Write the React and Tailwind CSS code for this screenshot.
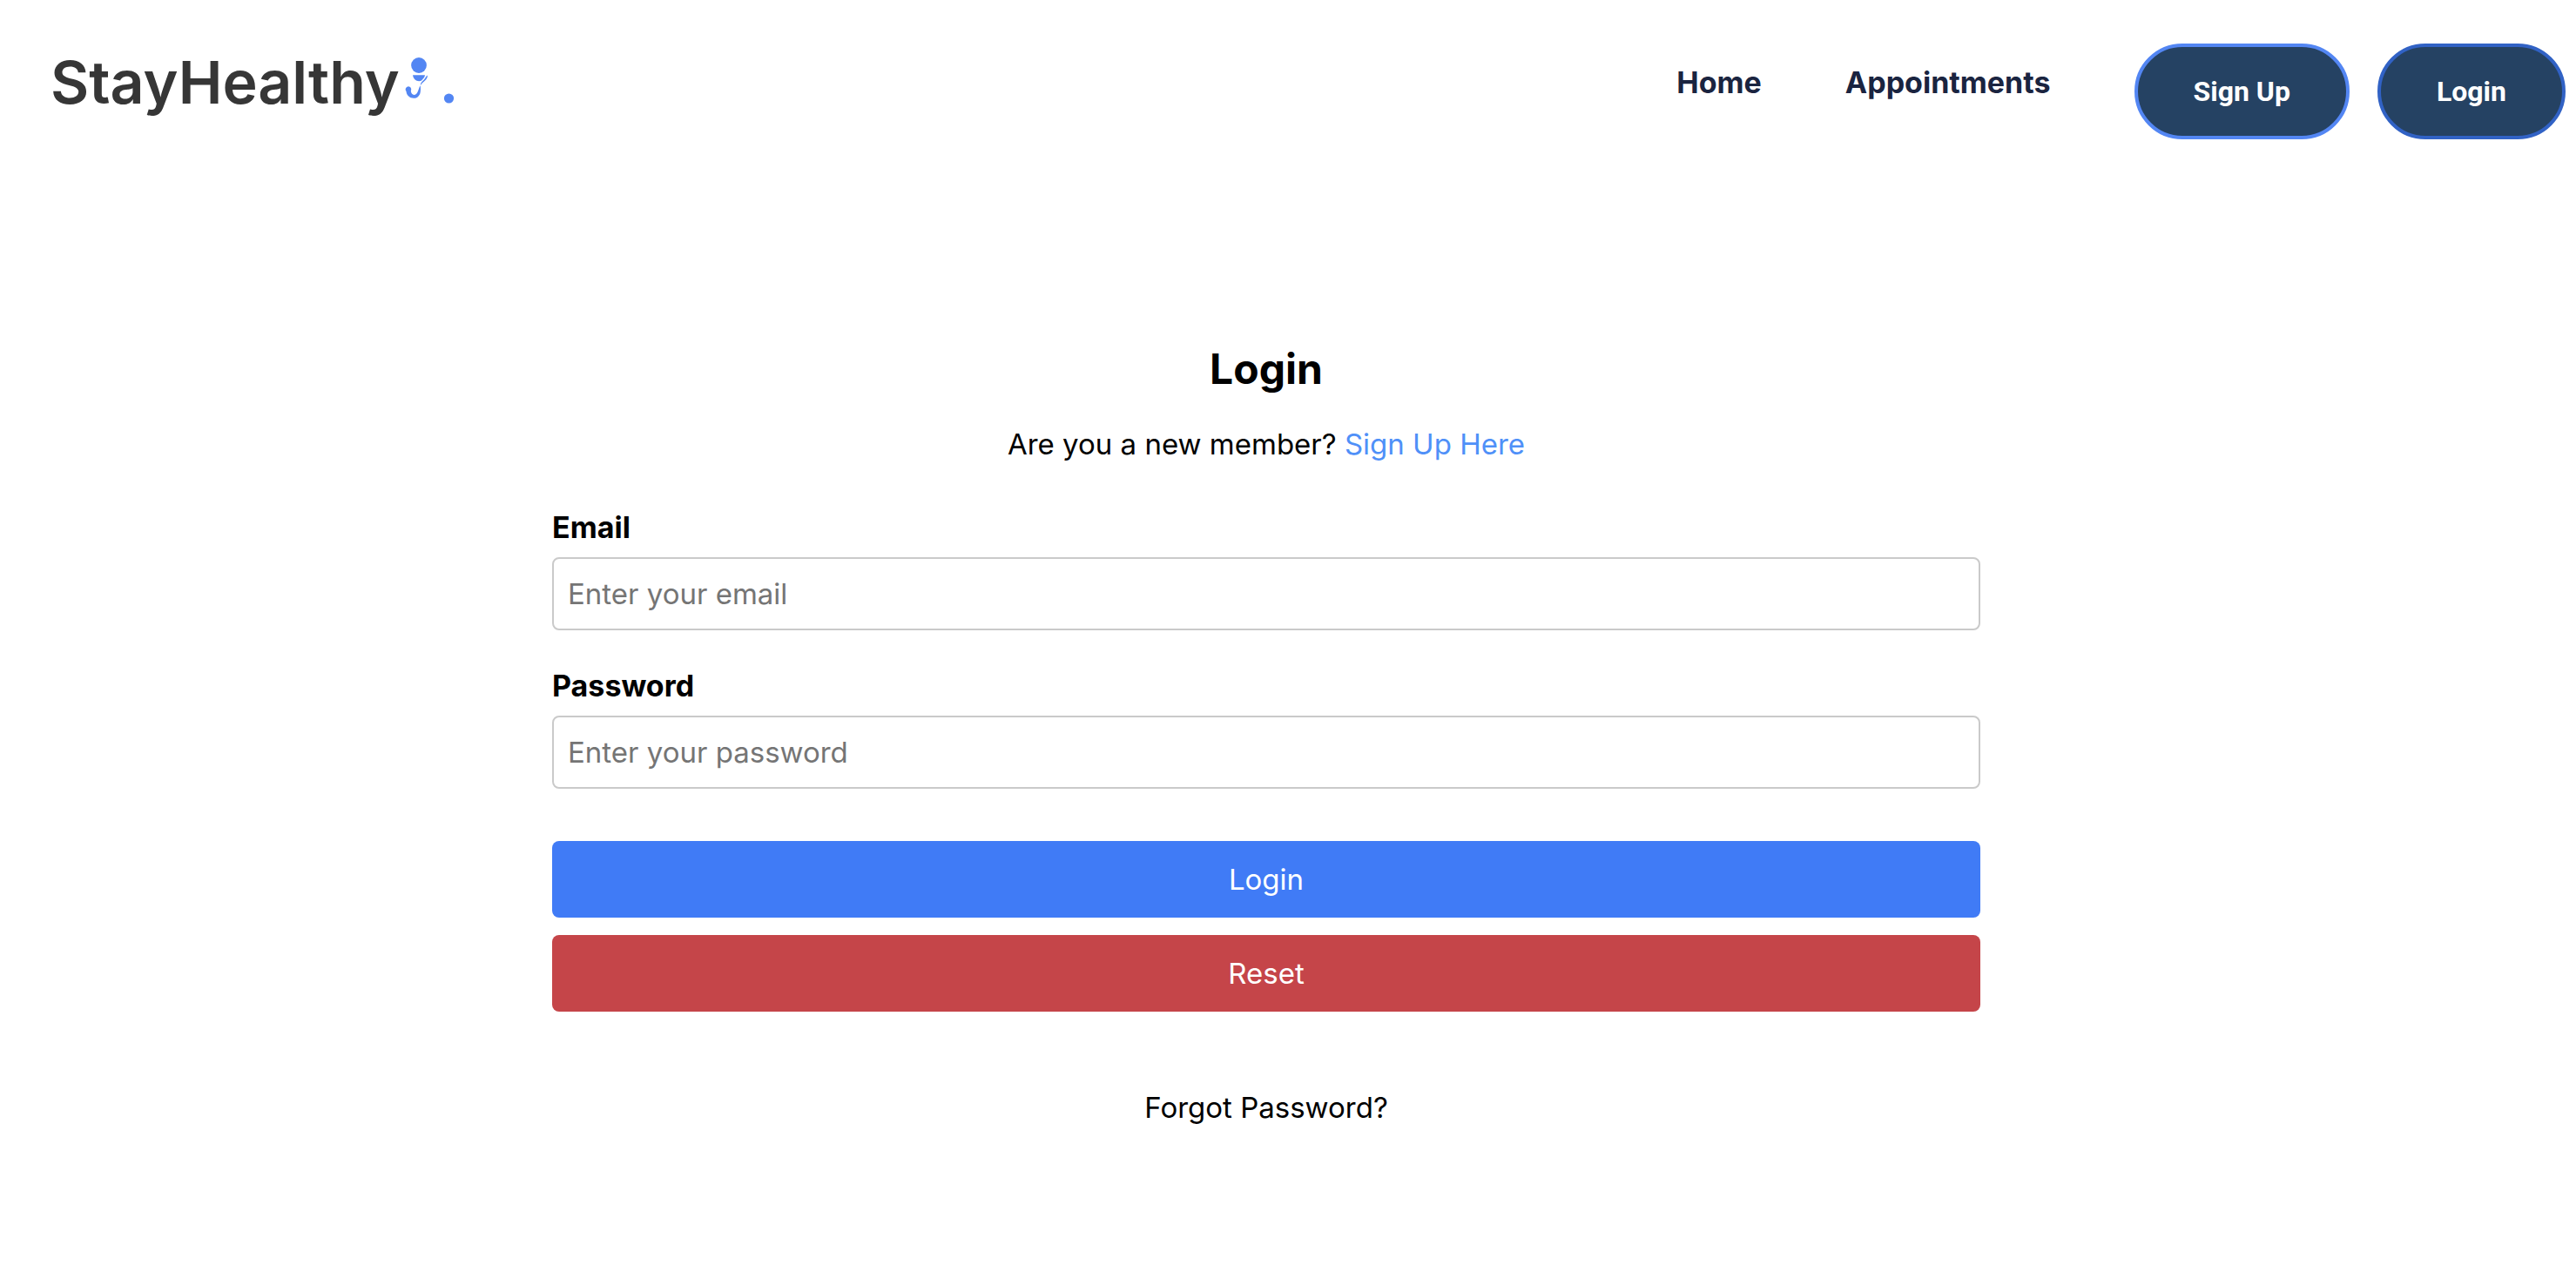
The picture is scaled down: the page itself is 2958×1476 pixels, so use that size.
function StethoscopeMark() {
  return (
    <svg viewBox="0 0 64 64" className="h-16 w-16" fill="#5386f3" aria-hidden="true">
      <circle cx="22" cy="15" r="8.900" />
      <path d="M15 26.300H29c-.1.900-.4 1.700-.8 2.400-1.500 1.700-2.300 3.200-3.600 4.100-1.300.5-3.500.5-5-.1-2.500-1.100-4.200-3.200-4.600-6.400Z" />
      <path d="M31.700 26.600c.5 1.600-.3 3.500-1.600 5-1.700 1.900-3.600 3-4.700 4.400l-1.500 1.900c0-1.300.3-2.400 1.100-3.400 1.200-1.400 2-1.800 3.300-3.500 1.200-1.600 2.200-3.600 3.400-4.400Z" />
      <path d="M23.600 38.200c.5 2.300.6 5.900-.1 8.700-1 3.600-4 6-7.500 5.800-4.600-.2-8-3.200-8.500-7.800a3.300 3.300 0 1 1 5.700-2.600c0 1.100-.4 1.700-.3 2.700.3 2.300 1.600 3.900 3.500 3.900 2 0 3.200-1.300 4.200-3.500 1.100-2.300 1.500-4.800 3-7.200Z" />
      <circle cx="56.500" cy="53" r="5.600" />
    </svg>
  );
}

function NavBar() {
  return (
    <nav className="flex items-start justify-between pt-[50px] pr-3 pl-[58px]">
      <a href="#home" className="flex items-start text-[68px] leading-[88px] font-semibold text-[#363636]">
        StayHealthy
        <span className="mt-[10px]">
          <StethoscopeMark />
        </span>
      </a>
      <ul className="flex items-start text-[34px] leading-[90px] font-bold text-[#1a2440]">
        <li className="mr-24">
          <a href="#home">Home</a>
        </li>
        <li className="mr-24">
          <a href="#appointments">Appointments</a>
        </li>
        <li className="mr-8">
          <button
            type="button"
            className="h-[110px] rounded-full border-4 border-[#5386f3] bg-[#254263] px-16 font-[Roboto,sans-serif] text-[32px] leading-10 font-bold text-white"
          >
            Sign Up
          </button>
        </li>
        <li>
          <button
            type="button"
            className="h-[110px] rounded-full border-4 border-[#3162c5] bg-[#254263] px-16 font-[Roboto,sans-serif] text-[32px] leading-10 font-bold text-white"
          >
            Login
          </button>
        </li>
      </ul>
    </nav>
  );
}

function Field({ id, label, type, placeholder }) {
  return (
    <div className="mb-[34px] flex flex-col">
      <label htmlFor={id} className="mb-1 text-[34px] leading-[60px] font-bold">
        {label}
      </label>
      <input
        id={id}
        name={id}
        type={type}
        placeholder={placeholder}
        className="h-[84px] rounded-lg border-2 border-[#cacaca] bg-white px-4 placeholder:text-[#757575]"
      />
    </div>
  );
}

export default function App() {
  return (
    <div className="min-h-screen bg-white font-[Inter,sans-serif] text-black">
      <NavBar />
      <main className="pt-[228px] pr-[50px] pb-16">
        <div className="mx-auto max-w-[1640px] text-[33px] leading-[60px]">
          <h1 className="text-center text-[48px] leading-[72px] font-bold">Login</h1>
          <p className="mt-5 text-center">
            Are you a new member?{" "}
            <a href="#signup" className="text-[#4f90f8]">
              Sign Up Here
            </a>
          </p>
          <form className="mt-9" onSubmit={(e) => e.preventDefault()}>
            <Field id="email" label="Email" type="email" placeholder="Enter your email" />
            <Field id="password" label="Password" type="password" placeholder="Enter your password" />
            <div className="mt-[60px] flex flex-col gap-5 leading-[88px] text-white">
              <button type="submit" className="rounded-lg bg-[#407bf6]">
                Login
              </button>
              <button type="reset" className="rounded-lg bg-[#c54549]">
                Reset
              </button>
            </div>
          </form>
          <p className="mt-20 text-center">
            <a href="#forgot">Forgot Password?</a>
          </p>
        </div>
      </main>
    </div>
  );
}
